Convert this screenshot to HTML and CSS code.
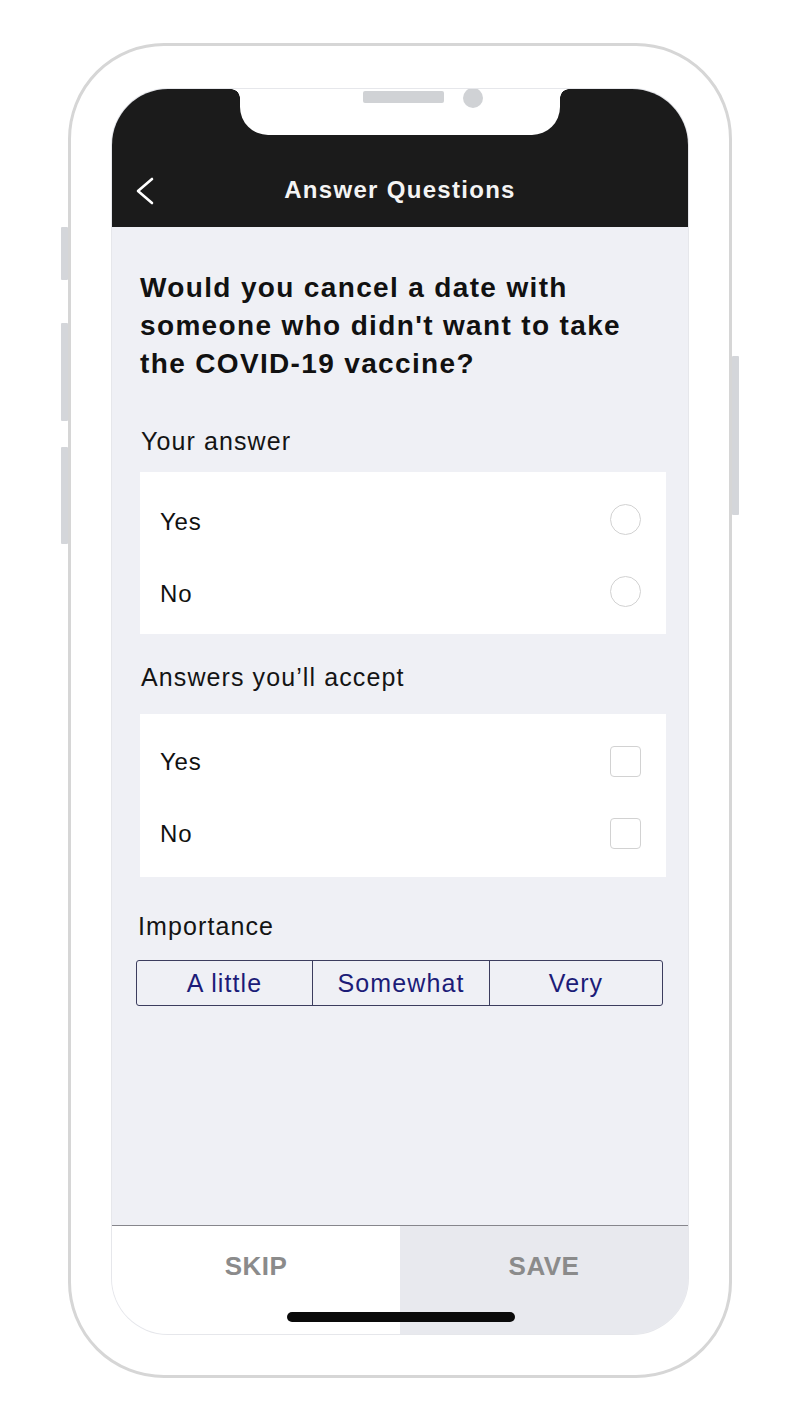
FILE: index.html
```html
<!DOCTYPE html>
<html lang="en">
<head>
<meta charset="utf-8">
<title>Answer Questions</title>
<link rel="stylesheet" href="styles.css">
</head>
<body>
<div class="stage">
  <div class="phone">
    <span class="side-btn side-l1"></span>
    <span class="side-btn side-l2"></span>
    <span class="side-btn side-l3"></span>
    <span class="side-btn side-r1"></span>
    <div class="screen">
      <div class="notch"><span class="speaker"></span><span class="camera"></span></div>
      <header class="topbar">
        <div class="topbar-row">
          <span class="back">
            <svg width="18" height="28" viewBox="0 0 18 28"><polyline points="16,2 2,14 16,26" fill="none" stroke="#fff" stroke-width="2.6" stroke-linecap="round" stroke-linejoin="round"/></svg>
          </span>
          <h1 class="title">Answer Questions</h1>
        </div>
      </header>
      <main class="content">
        <h2 class="question">Would you cancel a date with someone who didn't want to take the COVID-19 vaccine?</h2>
        <div class="label label-answer">Your answer</div>
        <div class="card card-answer">
          <div class="row"><span>Yes</span><span class="radio"></span></div>
          <div class="row"><span>No</span><span class="radio"></span></div>
        </div>
        <div class="label label-accept">Answers you’ll accept</div>
        <div class="card card-accept">
          <div class="row"><span>Yes</span><span class="check"></span></div>
          <div class="row"><span>No</span><span class="check"></span></div>
        </div>
        <div class="label label-importance">Importance</div>
        <div class="segmented">
          <span class="seg">A little</span>
          <span class="seg">Somewhat</span>
          <span class="seg">Very</span>
        </div>
      </main>
      <footer class="actions">
        <div class="action action-skip">SKIP</div>
        <div class="action action-save">SAVE</div>
      </footer>
      <span class="home-bar"></span>
    </div>
  </div>
</div>
</body>
</html>
```

FILE: styles.css
```css
* { box-sizing: border-box; }

html, body {
  margin: 0;
  padding: 0;
  background: #ffffff;
}

body {
  font-family: "Liberation Sans", Arial, sans-serif;
  color: #111111;
}

.stage {
  width: 800px;
  height: 1422px;
  padding-top: 43px;
  display: flex;
  justify-content: center;
  align-items: flex-start;
}

.phone {
  position: relative;
  width: 664px;
  height: 1335px;
  border: 3px solid #d6d6d6;
  border-radius: 96px;
  padding: 43px 41px 41px 41px;
  background: #ffffff;
}

.side-btn {
  position: absolute;
  width: 7px;
  background: #d4d6da;
  border-radius: 1px;
}
.side-l1 { left: -10px; top: 181px; height: 53px; }
.side-l2 { left: -10px; top: 277px; height: 98px; }
.side-l3 { left: -10px; top: 401px; height: 97px; }
.side-r1 { right: -10px; top: 310px; height: 159px; }

.screen {
  position: relative;
  width: 576px;
  height: 1245px;
  border-radius: 56px;
  overflow: hidden;
  display: flex;
  flex-direction: column;
  background: #eff0f5;
  box-shadow: 0 0 0 1px #e6e7eb;
}

.notch {
  position: absolute;
  top: 0;
  left: 128px;
  width: 320px;
  height: 46px;
  background: #ffffff;
  border-radius: 0 0 28px 28px;
  display: flex;
  align-items: flex-start;
  gap: 19px;
  padding: 2px 0 0 123px;
}
.notch::before,
.notch::after {
  content: "";
  position: absolute;
  top: 0;
  width: 9px;
  height: 9px;
}
.notch::before {
  left: -9px;
  background: radial-gradient(circle at 0 100%, transparent 8.5px, #ffffff 9px);
}
.notch::after {
  right: -9px;
  background: radial-gradient(circle at 100% 100%, transparent 8.5px, #ffffff 9px);
}

.speaker {
  width: 81px;
  height: 12px;
  background: #d0d2d5;
  border-radius: 2px;
}
.camera {
  width: 20px;
  height: 20px;
  margin-top: -3px;
  background: #d0d2d5;
  border-radius: 50%;
}

.topbar {
  height: 138px;
  background: #1b1b1b;
  display: flex;
  flex-direction: column;
  justify-content: flex-end;
  flex-shrink: 0;
}

.topbar-row {
  position: relative;
  height: 74px;
  display: flex;
  align-items: center;
  justify-content: center;
}

.back {
  position: absolute;
  left: 24px;
  top: 24px;
  display: flex;
}

.title {
  margin: 0;
  font-size: 24px;
  font-weight: 700;
  letter-spacing: 1.3px;
  color: #f4f4f4;
}

.content {
  flex: 1;
  padding: 42px 22px 0 28px;
}

.question {
  margin: 0;
  max-width: 505px;
  font-size: 28px;
  line-height: 38px;
  font-weight: 700;
  letter-spacing: 1.35px;
  color: #111111;
}

.label {
  font-size: 25px;
  line-height: 30px;
  letter-spacing: 1.1px;
  color: #141414;
  padding-left: 1px;
}
.label-answer { margin-top: 43px; margin-bottom: 16px; }
.label-accept { margin-top: 28px; margin-bottom: 22px; }
.label-importance { margin-top: 34px; margin-bottom: 19px; margin-left: -3px; }

.card {
  background: #ffffff;
  padding: 14px 25px 4px 20px;
}
.card-accept { padding-top: 12px; padding-bottom: 7px; }

.row {
  height: 72px;
  display: flex;
  align-items: center;
  justify-content: space-between;
  font-size: 24px;
  letter-spacing: 0.8px;
  color: #111111;
}

.radio {
  width: 31px;
  height: 31px;
  border: 1.5px solid #d2d2d2;
  border-radius: 50%;
  margin-top: -6px;
}

.check {
  width: 31px;
  height: 31px;
  border: 1.5px solid #d2d2d2;
  border-radius: 4px;
  margin-top: -2px;
}

.segmented {
  margin-left: -4px;
  width: 527px;
  height: 46px;
  display: grid;
  grid-template-columns: 175px 177px 1fr;
  border: 1px solid #3c3d5e;
  border-radius: 3px;
}
.seg {
  display: flex;
  align-items: center;
  justify-content: center;
  font-size: 25px;
  letter-spacing: 1.1px;
  color: #1c1c78;
}
.seg + .seg {
  border-left: 1px solid #3c3d5e;
}

.actions {
  height: 109px;
  display: flex;
  border-top: 1px solid #86868c;
  flex-shrink: 0;
}
.action {
  flex: 1;
  text-align: center;
  padding-top: 25px;
  font-size: 26px;
  line-height: 30px;
  font-weight: 700;
  letter-spacing: 0.5px;
  color: #8b8b8b;
}
.action-skip { background: #ffffff; }
.action-save { background: #e8e9ee; }

.home-bar {
  position: absolute;
  left: 175px;
  bottom: 12px;
  width: 228px;
  height: 10px;
  border-radius: 5px;
  background: #0a0a0a;
}
```
